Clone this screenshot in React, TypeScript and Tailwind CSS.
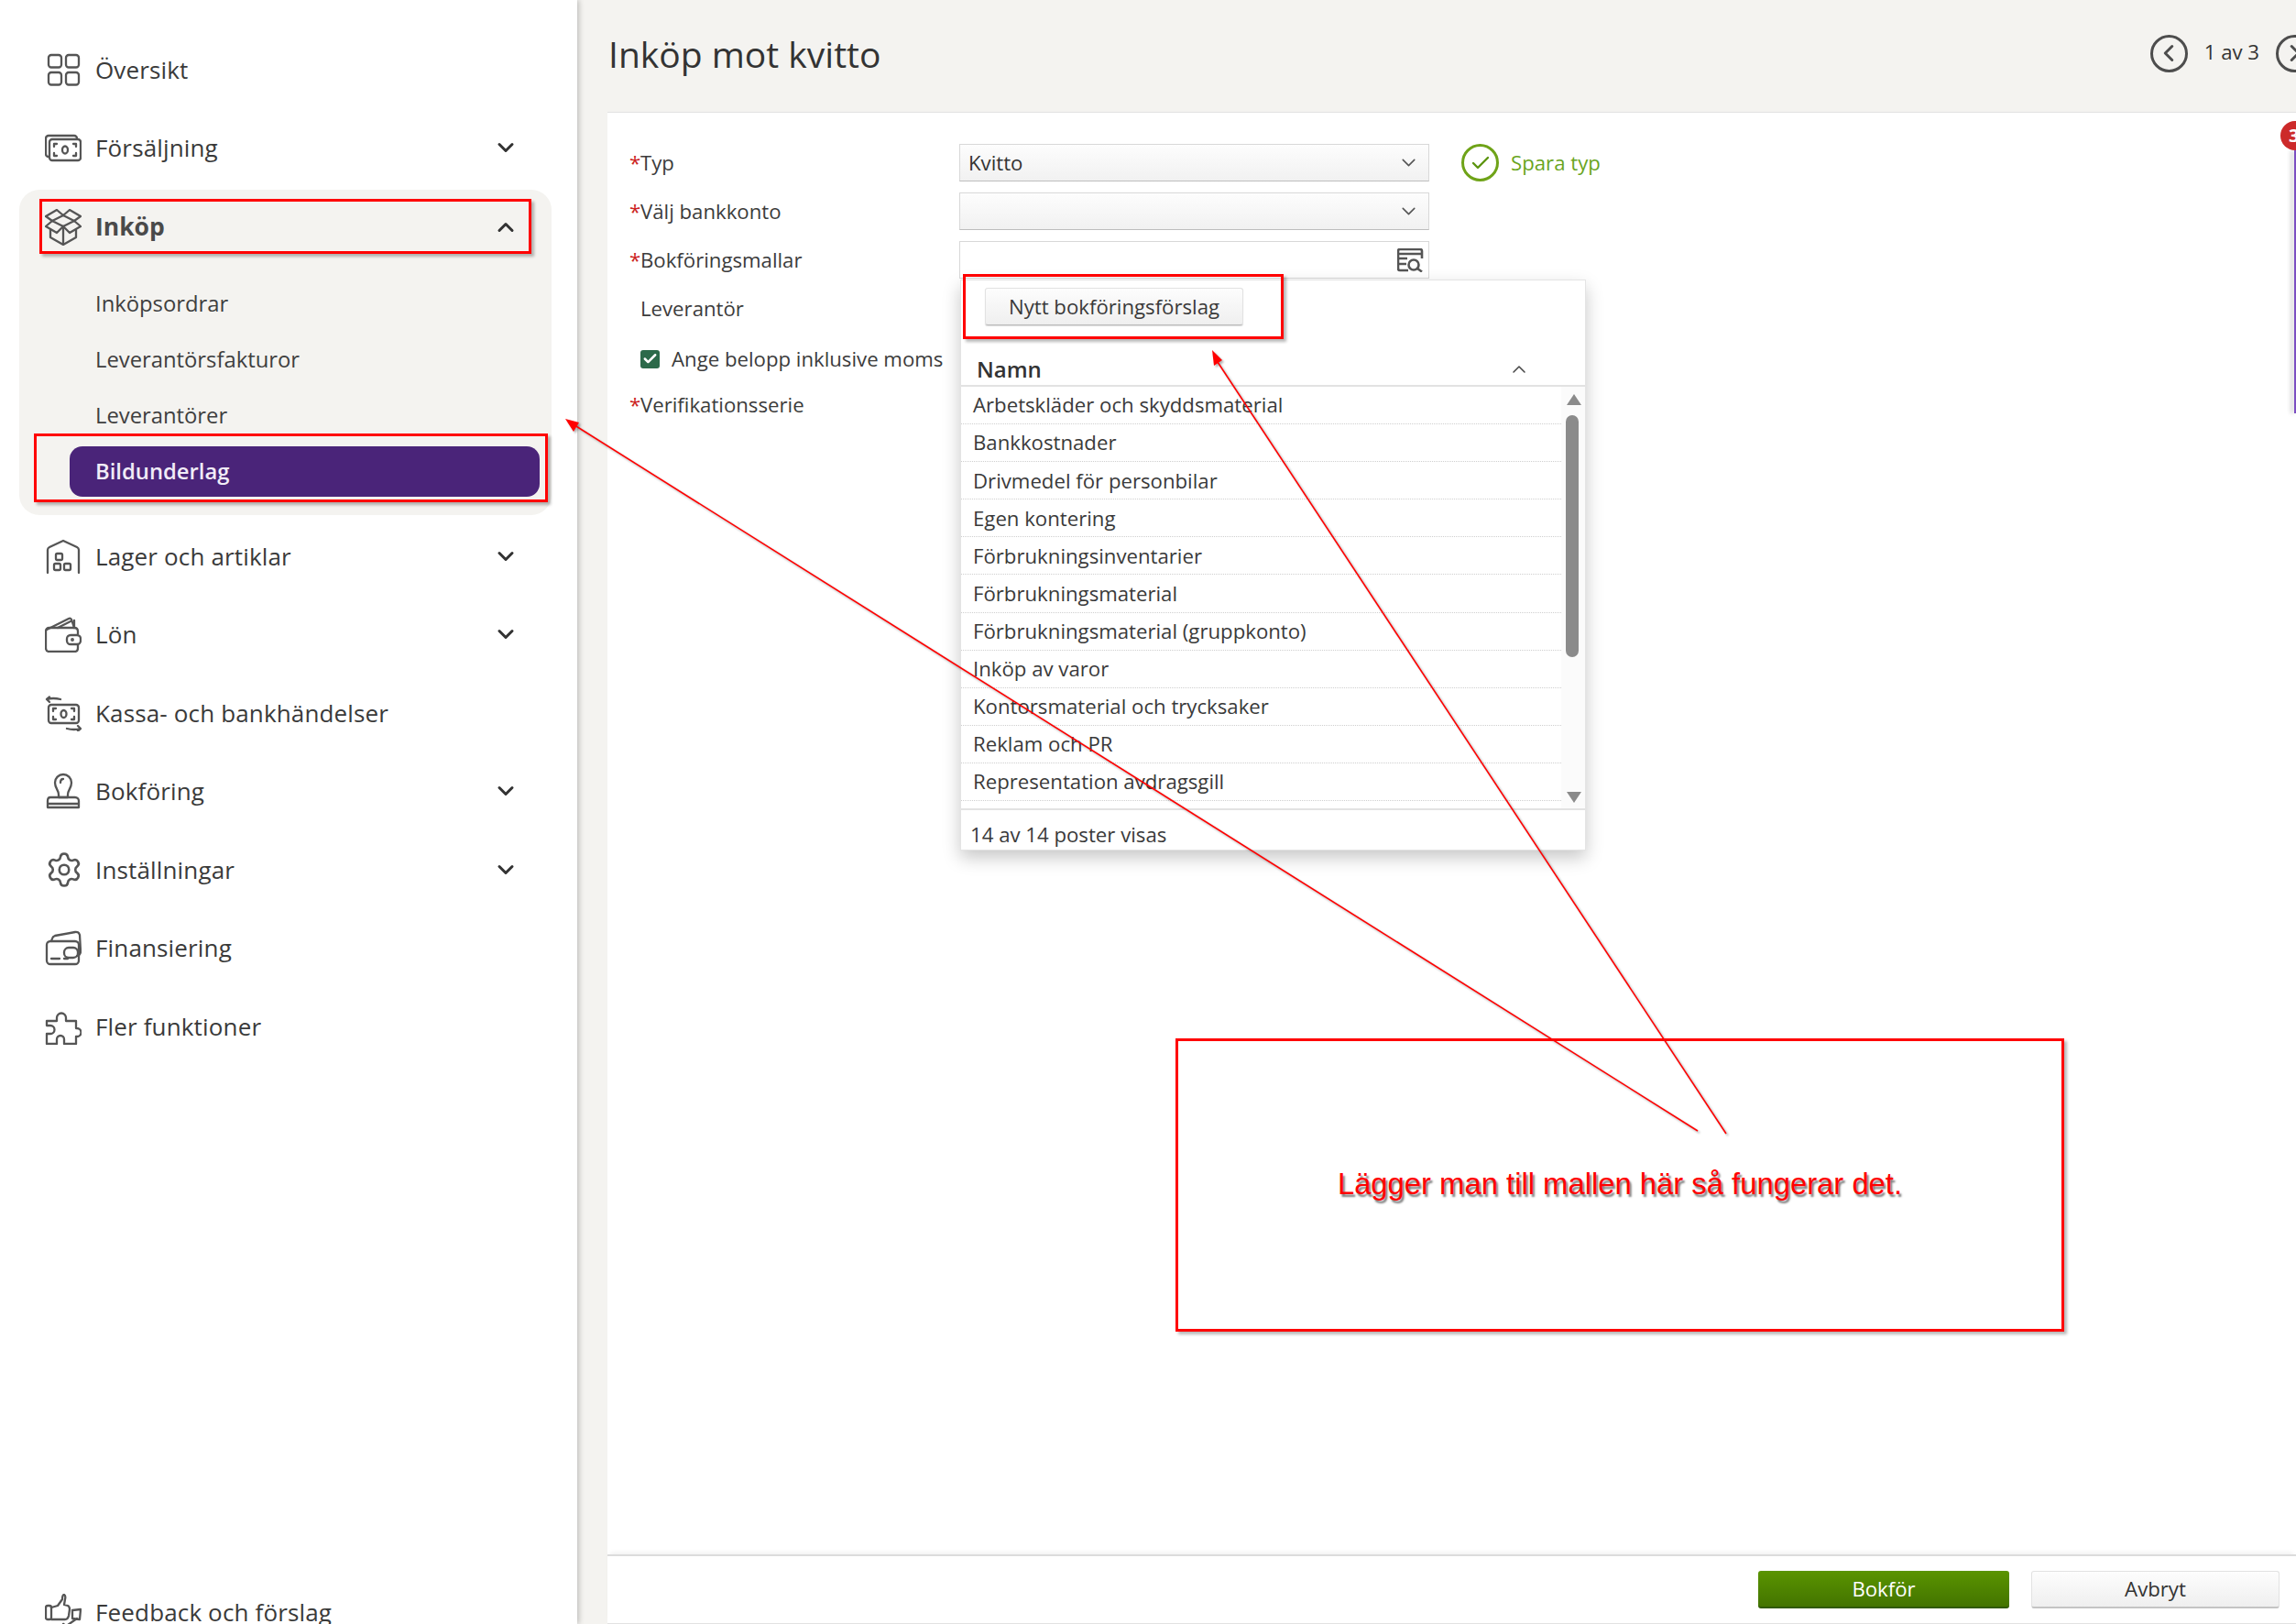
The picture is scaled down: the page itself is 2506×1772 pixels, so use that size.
import type { ReactNode } from 'react'
import { ChevronDown, ChevronUp, ChevronLeft, ChevronRight, Check, Settings } from 'lucide-react'

const stroke = { fill: 'none', stroke: '#555', strokeWidth: 2.3, strokeLinecap: 'round', strokeLinejoin: 'round' } as const

function Icon({ children }: { children: ReactNode }) {
  return (
    <svg viewBox="0 0 40 40" className="h-[40px] w-[40px] shrink-0" {...stroke}>
      {children}
    </svg>
  )
}

const OverviewIcon = () => (
  <Icon>
    <rect x="4" y="4" width="14" height="13.5" rx="3" />
    <rect x="23" y="4" width="14" height="13.5" rx="3" />
    <rect x="4" y="23" width="14" height="13.5" rx="3" />
    <rect x="23" y="23" width="14" height="13.5" rx="3" />
  </Icon>
)

const SalesIcon = () => (
  <Icon>
    <path d="M4 30 a3 3 0 0 1-3-3 V10 a3 3 0 0 1 3-3 h28 a3 3 0 0 1 3 3" />
    <rect x="5" y="11" width="34" height="23" rx="3" />
    <path d="M10 19v-3h3M34 19v-3h-3M10 26v3h3M34 26v3h-3" />
    <ellipse cx="22" cy="22.5" rx="3" ry="4" />
  </Icon>
)

const PurchaseIcon = () => (
  <Icon>
    <path d="M8 13 1 8l12-7 7 6 7-6 12 7-7 5" />
    <path d="M8 13l12-6 12 6-12 6z" />
    <path d="M8 13l-7 6 12 7 7-7 7 7 12-7-7-6" />
    <path d="M6 23v8l14 8 14-8v-8M20 19v20" />
  </Icon>
)

const StockIcon = () => (
  <Icon>
    <path d="M3 38V13q0-2 2-3L20 3l15 7q2 1 2 3v25" />
    <rect x="12" y="17" width="7" height="7" rx="1.5" />
    <rect x="10" y="28" width="7" height="7" rx="1.5" />
    <rect x="21" y="28" width="7" height="7" rx="1.5" />
  </Icon>
)

const WalletIcon = () => (
  <Icon>
    <path d="M36 20v-3q0-4-4-4H5q-4 0-4 4v18q0 4 4 4h27q4 0 4-4v-4" />
    <path d="M2 15 26 3q2-1 3 1l3 9M14 13l14-7" />
    <path d="M32 5v8" />
    <rect x="24" y="21" width="15" height="10" rx="4" />
    <circle cx="30" cy="26" r="0.8" />
  </Icon>
)

const CashIcon = () => (
  <Icon>
    <rect x="4" y="11" width="33" height="20" rx="3" />
    <path d="M9 18v-3h3M32 18v-3h-3M9 24v3h3M32 24v3h-3" />
    <ellipse cx="20.5" cy="21" rx="3" ry="4" />
    <path d="M2 5q7-2 15 0M2 5l3-2.5M2 5l3 3M39 37q-7 2-15 0M39 37l-3-3M39 37l-3 2.5" />
  </Icon>
)

const StampIcon = () => (
  <Icon>
    <path d="M15 24c0-5-4-7-4-13a9 9 0 0 1 18 0c0 6-4 8-4 13v3H15z" />
    <path d="M20 7q-3 0-3 4" />
    <path d="M6 27h27a4 4 0 0 1 4 4v3H3v-3q0-4 3-4zM3 34v4h34v-4" />
  </Icon>
)

const CardIcon = () => (
  <Icon>
    <path d="M7 13l1-3q.5-2 3-3l22-4q4-.5 5 3l1 18q0 4-4 5" />
    <rect x="2" y="13" width="35" height="25" rx="4" />
    <rect x="21" y="20" width="15" height="11" rx="5" />
    <path d="M7 32h9M21 32h4" />
  </Icon>
)

const PuzzleIcon = () => (
  <Icon>
    <path d="M2 14h11v-3.5a5 5 0 1 1 10 0V14h11v8h1a4.5 4.5 0 1 1 0 9h-1v8H21v-5a4 4 0 0 0-8 0v5H2V28h4a4.5 4.5 0 1 0 0-9H2z" />
  </Icon>
)

const FeedbackIcon = () => (
  <Icon>
    <rect x="1" y="13" width="6" height="15" rx="2" />
    <path d="M7 15l7-2 5-7q0-5 2-5 2 1 1 5l-1 6 4 1q2 1 2 4l-1 7q-1 4-4 4H7" />
    <path d="M30 18l9-1-1 11-8-1zM35 27l-10 7M20 33h.5" />
  </Icon>
)

const nav: { label: string; icon: ReactNode; arrow?: boolean }[] = [
  { label: 'Lager och artiklar', icon: <StockIcon />, arrow: true },
  { label: 'Lön', icon: <WalletIcon />, arrow: true },
  { label: 'Kassa- och bankhändelser', icon: <CashIcon /> },
  { label: 'Bokföring', icon: <StampIcon />, arrow: true },
  { label: 'Inställningar', icon: <Settings size={42} strokeWidth={1.5} color="#555" className="shrink-0" />, arrow: true },
  { label: 'Finansiering', icon: <CardIcon /> },
  { label: 'Fler funktioner', icon: <PuzzleIcon /> },
]

function NavRow({ label, icon, arrow }: { label: string; icon: ReactNode; arrow?: boolean }) {
  return (
    <div className="flex h-[85.5px] items-center pl-[49px] pr-[64px]">
      <div className="flex w-[55px] items-center">{icon}</div>
      <span className="flex-1 text-[26px] leading-[30px] tracking-[0.15px] text-[#3a3a3a]">{label}</span>
      {arrow && <ChevronDown size={28} strokeWidth={2.6} color="#333" />}
    </div>
  )
}

function Sidebar() {
  return (
    <aside className="z-10 flex h-full w-[630px] shrink-0 flex-col bg-white pt-[33px] shadow-[2px_0_6px_rgba(0,0,0,0.22)]">
      <NavRow label="Översikt" icon={<OverviewIcon />} />
      <NavRow label="Försäljning" icon={<SalesIcon />} arrow />
      <div className="ml-[21px] mr-[28px] mt-[3px] mb-[2px] h-[355px] rounded-[22px] bg-[#f4f3f0]">
        <div className="flex h-[81px] items-center pl-[28px] pr-[36px]">
          <div className="flex w-[55px] items-center"><PurchaseIcon /></div>
          <span className="flex-1 text-[26.5px] font-bold text-[#4a4a4a]">Inköp</span>
          <ChevronUp size={28} strokeWidth={2.6} color="#333" />
        </div>
        <div className="flex flex-col pl-[83px] pr-[13px] pt-[13px] text-[23.8px] text-[#3f3f3f]">
          <div className="flex h-[61px] items-center">Inköpsordrar</div>
          <div className="flex h-[61px] items-center">Leverantörsfakturor</div>
          <div className="flex h-[61px] items-center">Leverantörer</div>
          <div className="-ml-[28px] mt-[3px] flex h-[55px] items-center rounded-[14px] bg-[#4a2479] pl-[28px] font-semibold text-[#f1ecf7]">Bildunderlag</div>
        </div>
      </div>
      {nav.map((n) => <NavRow key={n.label} {...n} />)}
      <div className="-mb-[30px] mt-auto">
        <NavRow label="Feedback och förslag" icon={<FeedbackIcon />} />
      </div>
    </aside>
  )
}

function Field({ label, required, children, className }: { label: string; required?: boolean; children?: ReactNode; className: string }) {
  return (
    <div className={`flex h-[41px] items-center ${className}`}>
      <div className="w-[360px] shrink-0 text-[#3c3c3c]">
        <span className="inline-block w-[12px] text-[#c22]">{required ? '*' : ''}</span>{label}
      </div>
      {children}
    </div>
  )
}

function SelectBox({ value }: { value?: string }) {
  return (
    <div className="flex h-[41px] w-[513px] items-center justify-between border border-[#d8d8d8] border-b-[#bdbdbd] bg-gradient-to-b from-[#fdfdfd] to-[#f1f1f1] pl-[9px] pr-[9px] text-[#333]">
      <span>{value}</span>
      <ChevronDown size={25} strokeWidth={1.5} color="#555" />
    </div>
  )
}

const templates = [
  'Arbetskläder och skyddsmaterial',
  'Bankkostnader',
  'Drivmedel för personbilar',
  'Egen kontering',
  'Förbrukningsinventarier',
  'Förbrukningsmaterial',
  'Förbrukningsmaterial (gruppkonto)',
  'Inköp av varor',
  'Kontorsmaterial och trycksaker',
  'Reklam och PR',
  'Representation avdragsgill',
]

function TemplateMenu() {
  return (
    <div className="absolute left-0 top-[41px] z-20 flex h-[623px] w-[683px] flex-col border border-[#e4e4e4] bg-white shadow-[0_8px_18px_rgba(0,0,0,0.22)]">
      <div className="h-[116px] border-b-2 border-[#e2e2e2] pl-[26px] pt-[8px]">
        <button className="h-[41px] w-[282px] rounded-[3px] border border-[#e2e2e2] border-b-[#bbb] bg-gradient-to-b from-[#fdfdfd] to-[#efefef] text-[#3a3a3a] shadow-[0_1px_1px_rgba(0,0,0,0.15)]">Nytt bokföringsförslag</button>
        <div className="-ml-[9px] mt-[36px] flex h-[24px] items-center justify-between pr-[60px]">
          <span className="text-[24px] font-semibold text-[#333]">Namn</span>
          <ChevronUp size={24} strokeWidth={1.5} color="#444" />
        </div>
      </div>
      <div className="flex h-[462px] border-b-2 border-[#e2e2e2]">
        <div className="w-[655px]">
          {templates.map((t) => (
            <div key={t} className="flex h-[41.1px] items-center border-b border-dotted border-[#cfcfcf] pl-[13px] text-[#3a3a3a]">{t}</div>
          ))}
        </div>
        <div className="relative flex-1 bg-[#fbfbfb]">
          <div className="absolute left-[6px] top-[8px] h-0 w-0 border-x-[8px] border-b-[12px] border-x-transparent border-b-[#8b8b8b]" />
          <div className="absolute left-[5px] top-[31px] h-[264px] w-[14px] rounded-[7px] bg-[#8b8b8b]" />
          <div className="absolute left-[6px] top-[442px] h-0 w-0 border-x-[8px] border-t-[12px] border-x-transparent border-t-[#8b8b8b]" />
        </div>
      </div>
      <div className="flex flex-1 items-center pl-[10px] pt-[10px] text-[#3a3a3a]">14 av 14 poster visas</div>
    </div>
  )
}

function Annotations() {
  return (
    <>
      <svg className="pointer-events-none absolute left-0 top-0 z-30 h-[1772px] w-[2506px] drop-shadow-[2px_2px_1px_rgba(0,0,0,0.3)]" viewBox="0 0 2506 1772" fill="none">
        <path d="M1853 1234 624 462" stroke="#f00" strokeWidth="1.6" />
        <path d="M617 457 632 461 626 471z" fill="#f00" />
        <path d="M1884 1237 1327 392" stroke="#f00" strokeWidth="1.6" />
        <path d="M1323 382 1334 393 1325 399z" fill="#f00" />
      </svg>
      <div className="pointer-events-none absolute left-[43px] top-[217px] z-30 h-[60px] w-[537px] border-[3px] border-[#f00] shadow-[3px_3px_3px_rgba(0,0,0,0.28)]" />
      <div className="pointer-events-none absolute left-[37px] top-[473px] z-30 h-[75px] w-[561px] border-[3px] border-[#f00] shadow-[3px_3px_3px_rgba(0,0,0,0.28)]" />
      <div className="pointer-events-none absolute left-[1051px] top-[299px] z-30 h-[71px] w-[350px] border-[3px] border-[#f00] shadow-[3px_3px_3px_rgba(0,0,0,0.28)]" />
      <div className="pointer-events-none absolute left-[1283px] top-[1133px] z-30 flex h-[320px] w-[970px] items-center justify-center border-[3px] border-[#f00] pb-[2px] shadow-[3px_3px_3px_rgba(0,0,0,0.28)]">
        <span className="font-['Liberation_Sans',Arial,sans-serif] text-[32.8px] text-[#f00] [text-shadow:2px_3px_2px_rgba(0,0,0,0.5)]">Lägger man till mallen här så fungerar det.</span>
      </div>
    </>
  )
}

export default function App() {
  return (
    <div className="relative flex h-[1772px] w-[2506px] overflow-hidden bg-[#f4f3f0] font-['Open_Sans','Noto_Sans',sans-serif] text-[22.2px]">
      <Sidebar />
      <main className="flex min-w-0 flex-1 flex-col pl-[33px]">
        <header className="flex h-[122px] shrink-0 items-center justify-between pb-[4px] pl-[1px] pr-0">
          <h1 className="text-[39px] text-[#333]">Inköp mot kvitto</h1>
          <div className="-mr-[19px] -mt-[2px] flex items-center gap-[18px] text-[#333]">
            <div className="flex h-[41px] w-[41px] items-center justify-center rounded-full border-[3px] border-[#4d4d4d]"><ChevronLeft size={30} strokeWidth={2.4} color="#4d4d4d" /></div>
            <span className="-mt-[2px]">1 av 3</span>
            <div className="flex h-[41px] w-[41px] items-center justify-center rounded-full border-[3px] border-[#4d4d4d]"><ChevronRight size={30} strokeWidth={2.4} color="#4d4d4d" /></div>
          </div>
        </header>
        <section className="relative flex flex-1 flex-col border-y border-[#e2e2e2] bg-white pt-[34px]">
          <div className="absolute right-[-15px] top-[9px] z-10 flex h-[32px] w-[32px] items-center rounded-full bg-[#cc2a2a] pl-[9px] text-[20px] font-bold text-white">3</div>
          <div className="absolute right-0 top-[41px] h-[287px] w-[2px] bg-[#7c4fc2] shadow-[-3px_0_5px_rgba(0,0,0,0.3)]" />
          <div className="flex-1 pl-[24px]">
            <Field label="Typ" required className="">
              <SelectBox value="Kvitto" />
              <div className="ml-[35px] flex h-[41px] w-[41px] items-center justify-center rounded-full border-[3px] border-[#6fa318]"><Check size={24} strokeWidth={2.4} color="#5c9410" /></div>
              <span className="ml-[13px] text-[#6aa51e]">Spara typ</span>
            </Field>
            <Field label="Välj bankkonto" required className="mt-[12px]"><SelectBox /></Field>
            <Field label="Bokföringsmallar" required className="mt-[12px]">
              <div className="relative flex h-[41px] w-[513px] items-center justify-end border border-[#d8d8d8] bg-white pr-[5px]">
                <svg viewBox="0 0 29 26" className="h-[26px] w-[29px]" fill="none" stroke="#555" strokeWidth="2.6">
                  <path d="M12 24H3a2 2 0 0 1-2-2V3a2 2 0 0 1 2-2h22a2 2 0 0 1 2 2v8" />
                  <path d="M1 6h26M1 11h10M1 17h9" />
                  <circle cx="18" cy="18" r="5.5" />
                  <path d="m22 22 5 3.5" />
                </svg>
                <TemplateMenu />
              </div>
            </Field>
            <Field label="Leverantör" className="mt-[12px]" />
            <div className="mt-[14px] flex h-[41px] items-center pl-[12px] text-[#3c3c3c]">
              <div className="mr-[13px] flex h-[20px] w-[21px] items-center justify-center rounded-[3px] bg-[#2c6a4a]"><Check size={17} strokeWidth={3.5} color="#fff" /></div>
              Ange belopp inklusive moms
            </div>
            <Field label="Verifikationsserie" required className="mt-[9px]" />
          </div>
          <div className="flex h-[75px] shrink-0 items-start justify-end gap-[24px] border-t-2 border-[#dcdcdc] pr-[18px] pt-[16px] shadow-[0_-4px_6px_-3px_rgba(0,0,0,0.08)]">
            <button className="h-[41px] w-[274px] rounded-[3px] border-b-2 border-[#2f5a00] bg-gradient-to-b from-[#5a9400] to-[#437400] text-white">Bokför</button>
            <button className="h-[41px] w-[271px] rounded-[3px] border border-[#e2e2e2] border-b-2 border-b-[#c4c4c4] bg-gradient-to-b from-[#fdfdfd] to-[#efefef] text-[#333]">Avbryt</button>
          </div>
        </section>
      </main>
      <Annotations />
    </div>
  )
}
